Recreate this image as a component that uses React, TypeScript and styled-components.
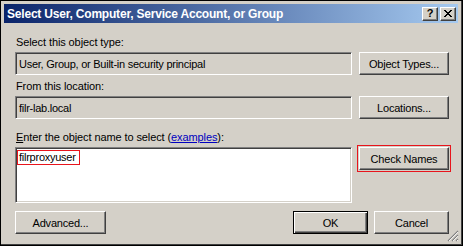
import styled, { createGlobalStyle } from "styled-components";

const GlobalStyle = createGlobalStyle`
    html, body {
        margin: 0;
        padding: 0;
        background: #ffffff;
    }
    body {
        font-family: "Liberation Sans", Arial, sans-serif;
        font-size: 11px;
    }
`;

const StyledWindow = styled.div`
    position: relative;
    box-sizing: border-box;
    width: 463px;
    height: 246px;
    background-color: #d4d0c8;
    border: 1px solid #000000;
    box-shadow: inset -1px -1px 0 #404040, inset 1px 1px 0 #d4d0c8;
    padding: 3px 4px 3px 3px;
    display: flex;
    flex-direction: column;
`;

const StyledTitleBar = styled.div`
    height: 19px;
    display: flex;
    align-items: center;
    padding: 0 2px 0 3px;
    background: linear-gradient(to right, #0a246a, #a6caf0);
    color: #ffffff;
    font-weight: bold;
    font-size: 12px;
    letter-spacing: -0.2px;
`;

const StyledTitle = styled.span`
    flex: 1;
    white-space: nowrap;
`;

const StyledCaptionButton = styled.button`
    box-sizing: border-box;
    width: 16px;
    height: 14px;
    margin-left: 2px;
    padding: 0;
    display: flex;
    align-items: center;
    justify-content: center;
    background-color: #d4d0c8;
    border: 1px solid;
    border-color: #ffffff #404040 #404040 #ffffff;
    box-shadow: inset -1px -1px 0 #808080;
    font-family: "Liberation Sans", Arial, sans-serif;
    font-weight: bold;
    font-size: 11px;
    color: #000000;
    line-height: 1;
`;

const StyledContent = styled.div`
    flex: 1;
    display: flex;
    flex-direction: column;
    padding: 13px 9px 0 11px;
`;

const StyledLabel = styled.div<{ $top?: number }>`
    height: 13px;
    line-height: 13px;
    margin-top: ${(props) => props.$top ?? 0}px;
    margin-bottom: 3px;
    padding-left: 1px;
    letter-spacing: -0.1px;
    color: #000000;
    white-space: nowrap;
`;

const StyledMnemonic = styled.span`
    text-decoration: underline;
`;

const StyledLink = styled.span`
    color: #0000c0;
    text-decoration: underline;
`;

const StyledRow = styled.div`
    display: flex;
    align-items: flex-start;
    gap: 7px;
`;

const StyledField = styled.div<{ $white?: boolean; $height: number }>`
    box-sizing: border-box;
    flex: 1;
    height: ${(props) => props.$height}px;
    background-color: ${(props) => (props.$white ? "#ffffff" : "#d4d0c8")};
    border: 1px solid;
    border-color: #808080 #ffffff #ffffff #808080;
    box-shadow: inset 1px 1px 0 #404040, inset -1px -1px 0 #d4d0c8;
    padding: ${(props) => (props.$white ? "2px 0 0 1px" : "0 0 0 3px")};
    display: flex;
    align-items: ${(props) => (props.$white ? "flex-start" : "center")};
    letter-spacing: -0.25px;
    color: #000000;
    white-space: nowrap;
`;

const StyledEntry = styled.span`
    display: inline-block;
    height: 15px;
    line-height: 13px;
    box-sizing: border-box;
    border: 1px solid #e8141c;
    padding: 0 3px 0 1px;
`;

const StyledButton = styled.button<{ $width?: number; $default?: boolean }>`
    box-sizing: border-box;
    width: ${(props) => props.$width ?? 90}px;
    height: 23px;
    padding: 0;
    background-color: #d4d0c8;
    border: 1px solid;
    border-color: ${(props) =>
        props.$default ? "#000000" : "#ffffff #404040 #404040 #ffffff"};
    box-shadow: ${(props) =>
        props.$default
            ? "inset 1px 1px 0 #ffffff, inset -1px -1px 0 #404040, inset -2px -2px 0 #808080"
            : "inset -1px -1px 0 #808080"};
    font-family: "Liberation Sans", Arial, sans-serif;
    font-size: 11px;
    letter-spacing: -0.2px;
    color: #000000;
`;

const StyledHighlight = styled.div`
    outline: 1px solid #e8141c;
    outline-offset: 1px;
    display: flex;
`;

const StyledFooter = styled.div`
    display: flex;
    align-items: center;
    gap: 6px;
    margin-top: 8px;
`;

const StyledSpacer = styled.div`
    flex: 1;
`;

const StyledGrip = styled.svg`
    position: absolute;
    right: 3px;
    bottom: 3px;
`;

export default function App() {
    return (
        <>
            <GlobalStyle />
            <StyledWindow>
                <StyledTitleBar>
                    <StyledTitle>Select User, Computer, Service Account, or Group</StyledTitle>
                    <StyledCaptionButton>?</StyledCaptionButton>
                    <StyledCaptionButton>
                        <svg width="8" height="7" viewBox="0 0 8 7">
                            <path d="M0 0 L7 7 M1 0 L8 7 M7 0 L0 7 M8 0 L1 7" stroke="#000" strokeWidth="1" />
                        </svg>
                    </StyledCaptionButton>
                </StyledTitleBar>

                <StyledContent>
                    <StyledLabel>Select this object type:</StyledLabel>
                    <StyledRow>
                        <StyledField $height={23}>User, Group, or Built-in security principal</StyledField>
                        <StyledButton>Object Types...</StyledButton>
                    </StyledRow>

                    <StyledLabel $top={5}>From this location:</StyledLabel>
                    <StyledRow>
                        <StyledField $height={23}>filr-lab.local</StyledField>
                        <StyledButton>Locations...</StyledButton>
                    </StyledRow>

                    <StyledLabel $top={12}>
                        <StyledMnemonic>E</StyledMnemonic>nter the object name to select (
                        <StyledLink>examples</StyledLink>):
                    </StyledLabel>
                    <StyledRow>
                        <StyledField $white $height={56}>
                            <StyledEntry>filrproxyuser</StyledEntry>
                        </StyledField>
                        <StyledHighlight>
                            <StyledButton>Check Names</StyledButton>
                        </StyledHighlight>
                    </StyledRow>

                    <StyledFooter>
                        <StyledButton $width={91}>Advanced...</StyledButton>
                        <StyledSpacer />
                        <StyledButton $width={75} $default>OK</StyledButton>
                        <StyledButton $width={75}>Cancel</StyledButton>
                    </StyledFooter>
                </StyledContent>

                <StyledGrip width="12" height="12" viewBox="0 0 12 12">
                    <path d="M11 1 L1 11 M11 5 L5 11 M11 9 L9 11" stroke="#808080" strokeWidth="1.2" />
                    <path d="M11 2 L2 11 M11 6 L6 11 M11 10 L10 11" stroke="#ffffff" strokeWidth="0.8" />
                </StyledGrip>
            </StyledWindow>
        </>
    );
}
